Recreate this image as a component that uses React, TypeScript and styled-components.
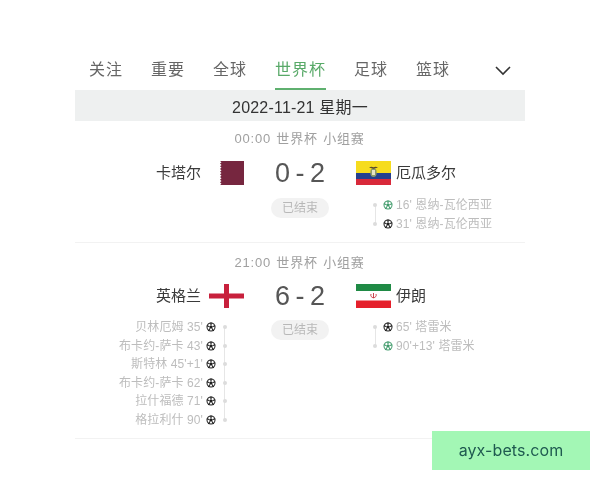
import React from "react";
import styled, { createGlobalStyle } from "styled-components";

const Global = createGlobalStyle`
  html, body { margin: 0; padding: 0; background: #fff; }
  body { font-family: "Liberation Sans", "Noto Sans CJK SC", sans-serif; }
`;

const Page = styled.div`
  position: relative;
  width: 600px;
  height: 480px;
  overflow: hidden;
  background: #fff;
  padding: 51px 0 0 75px;
  box-sizing: border-box;
  filter: blur(0.35px);
`;
const Column = styled.div`
  width: 450px;
`;
const Tabs = styled.nav`
  display: flex;
  align-items: flex-start;
  height: 39px;
  padding-left: 14px;
  gap: 28px;
  position: relative;
`;
const Tab = styled.div<{ $active?: boolean }>`
  height: 39px;
  box-sizing: border-box;
  padding-top: 8px;
  font-size: 16px;
  line-height: 22px;
  letter-spacing: 1px;
  color: ${(p) => (p.$active ? "#58a968" : "#666")};
  border-bottom: 2px solid ${(p) => (p.$active ? "#5fb06f" : "transparent")};
`;
const Chevron = styled.svg`
  position: absolute;
  left: 419px;
  top: 14px;
`;
const DateBar = styled.div`
  height: 31px;
  background: #eef0f0;
  display: flex;
  align-items: center;
  justify-content: center;
  font-size: 16px;
  letter-spacing: 0.2px;
  color: #333;
`;
const Match = styled.section<{ $height: number; $top: number }>`
  height: ${(p) => p.$height}px;
  box-sizing: border-box;
  padding-top: ${(p) => p.$top}px;
  border-bottom: 1px solid #f2f2f2;
`;
const Meta = styled.div`
  text-align: center;
  font-size: 13px;
  line-height: 18px;
  color: #a0a0a0;
  letter-spacing: 0.8px;
  word-spacing: 1px;
  padding-right: 1px;
`;
const Teams = styled.div<{ $top: number }>`
  display: grid;
  grid-template-columns: 1fr 110px 1fr;
  align-items: center;
  height: 36px;
  margin-top: ${(p) => p.$top}px;
`;
const Side = styled.div<{ $home?: boolean }>`
  display: flex;
  align-items: center;
  justify-content: ${(p) => (p.$home ? "flex-end" : "flex-start")};
  gap: ${(p) => (p.$home ? "8px" : "5px")};
  padding: ${(p) => (p.$home ? "0 1px 0 0" : "0 0 0 1px")};
`;
const TeamName = styled.span`
  font-size: 15px;
  line-height: 20px;
  color: #3a3a3a;
`;
const FlagBox = styled.div`
  width: 35px;
  height: 24px;
  display: flex;
  justify-content: flex-end;
`;
const Score = styled.div`
  text-align: center;
  font-size: 27px;
  line-height: 36px;
  color: #565656;
  word-spacing: -2px;
`;
const Details = styled.div<{ $top: number }>`
  display: grid;
  grid-template-columns: 1fr 110px 1fr;
  align-items: start;
  margin-top: ${(p) => p.$top}px;
`;
const Status = styled.div<{ $top: number }>`
  justify-self: center;
  width: 58px;
  height: 20px;
  margin-top: ${(p) => p.$top}px;
  border-radius: 10px;
  background: #f2f2f2;
  text-align: center;
  font-size: 12px;
  line-height: 20px;
  color: #b8b8b8;
`;
const Goals = styled.ul<{ $home?: boolean }>`
  position: relative;
  list-style: none;
  margin: 0;
  padding: 0;
  ${(p) => (p.$home ? "padding-right: 29px;" : "padding-left: 28px;")}
  &::before {
    content: "";
    position: absolute;
    top: 9px;
    bottom: 9px;
    ${(p) => (p.$home ? "right: 20px;" : "left: 20px;")}
    width: 1px;
    background: #e6e6e6;
  }
`;
const Goal = styled.li<{ $home?: boolean }>`
  position: relative;
  display: flex;
  flex-direction: ${(p) => (p.$home ? "row" : "row-reverse")};
  justify-content: flex-end;
  align-items: center;
  height: 18.5px;
  gap: 3px;
  font-size: 12px;
  line-height: 18px;
  letter-spacing: 0.1px;
  color: #bdbdbd;
  white-space: nowrap;
  &::after {
    content: "";
    position: absolute;
    top: 7px;
    ${(p) => (p.$home ? "right: -11px;" : "left: -10px;")}
    width: 4px;
    height: 4px;
    border-radius: 50%;
    background: #dcdcdc;
  }
`;
const Watermark = styled.div`
  position: absolute;
  left: 432px;
  top: 431px;
  width: 158px;
  height: 39px;
  background: #a3f7b5;
  color: #1f5a50;
  font-size: 16px;
  letter-spacing: 0.1px;
  line-height: 39px;
  text-align: center;
  font-family: "Inter", sans-serif;
`;

const Ball = ({ green }: { green?: boolean }) => {
  const c = green ? "#3f9a6a" : "#1c1c1c";
  return (
    <svg width="10" height="10" viewBox="0 0 10 10" style={{ flex: "none" }}>
      <circle cx="5" cy="5" r="4.5" fill={c} />
      <circle cx="5" cy="5" r="3.5" fill="#fff" />
      <polygon points="5,3.200 6.800,4.500 6.100,6.500 3.900,6.500 3.200,4.500" fill={c} />
      <path d="M5 .5v2.700M.8 3.700l2.400.8M9.200 3.700l-2.400.8M2.400 8.800l1.500-2.300M7.600 8.800l-1.500-2.300" stroke={c} strokeWidth="1.200" />
    </svg>
  );
};

const Qatar = () => (
  <svg width="24" height="24" viewBox="0 0 24 24">
    <path
      d="M24 0H0l1.5 1.3L0 2.6l1.5 1.4L0 5.300l1.500 1.300L0 8l1.500 1.300L0 10.700l1.500 1.300L0 13.300l1.500 1.400L0 16l1.500 1.300L0 18.700 1.500 20 0 21.300l1.500 1.400L0 24h24z"
      fill="#76263f"
    />
  </svg>
);
const Ecuador = () => (
  <svg width="35" height="24" viewBox="0 0 35 24">
    <rect width="35" height="12" fill="#f6dc1e" />
    <rect y="12" width="35" height="6" fill="#24408e" />
    <rect y="18" width="35" height="6" fill="#d8293a" />
    <ellipse cx="17.500" cy="11.500" rx="3.200" ry="4.500" fill="#8c9a6a" />
    <path d="M13 6.500c1.500-1 3-1 4.500-.2 1.500-.8 3-.8 4.500.2l-4.500 1.200z" fill="#5a4a2a" />
    <rect x="16" y="9" width="3" height="5" fill="#e6e2c8" />
  </svg>
);
const England = () => (
  <svg width="35" height="24" viewBox="0 0 35 24">
    <rect width="35" height="24" fill="#fff" />
    <rect x="15" width="5" height="24" fill="#c8203c" />
    <rect y="9.500" width="35" height="5" fill="#c8203c" />
  </svg>
);
const Iran = () => (
  <svg width="35" height="24" viewBox="0 0 35 24">
    <rect width="35" height="7" fill="#1f8a45" />
    <rect y="7" width="35" height="9" fill="#fff" />
    <rect y="16.500" width="35" height="7.500" fill="#e5202b" />
    <path d="M17.500 9v5M15 10c-.8 2 .5 3.500 2.500 3.800 2-.3 3.300-1.800 2.500-3.800" fill="none" stroke="#c8303a" strokeWidth="0.9" />
  </svg>
);

type GoalT = { text: string; green?: boolean };

const GoalList = ({ items, home }: { items: GoalT[]; home?: boolean }) => (
  <Goals $home={home}>
    {items.map((g, i) => (
      <Goal key={i} $home={home}>
        <span>{g.text}</span>
        <Ball green={g.green} />
      </Goal>
    ))}
  </Goals>
);

const tabs = ["关注", "重要", "全球", "世界杯", "足球", "篮球"];

export default function App() {
  return (
    <>
      <Global />
      <Page>
        <Column>
          <Tabs>
            {tabs.map((t) => (
              <Tab key={t} $active={t === "世界杯"}>
                {t}
              </Tab>
            ))}
            <Chevron width="18" height="11" viewBox="0 0 18 11" fill="none">
              <path d="M2 2l7 7 7-7" stroke="#333" strokeWidth="1.600" />
            </Chevron>
          </Tabs>
          <DateBar>2022-11-21 星期一</DateBar>
          <Match $height={122} $top={9}>
            <Meta>00:00 世界杯 小组赛</Meta>
            <Teams $top={7}>
              <Side $home>
                <TeamName>卡塔尔</TeamName>
                <FlagBox>
                  <Qatar />
                </FlagBox>
              </Side>
              <Score>0 - 2</Score>
              <Side>
                <Ecuador />
                <TeamName>厄瓜多尔</TeamName>
              </Side>
            </Teams>
            <Details $top={5}>
              <div />
              <Status $top={2}>已结束</Status>
              <GoalList
                items={[
                  { text: "16' 恩纳-瓦伦西亚", green: true },
                  { text: "31' 恩纳-瓦伦西亚" },
                ]}
              />
            </Details>
          </Match>
          <Match $height={196} $top={11}>
            <Meta>21:00 世界杯 小组赛</Meta>
            <Teams $top={6}>
              <Side $home>
                <TeamName>英格兰</TeamName>
                <FlagBox>
                  <England />
                </FlagBox>
              </Side>
              <Score>6 - 2</Score>
              <Side>
                <Iran />
                <TeamName>伊朗</TeamName>
              </Side>
            </Teams>
            <Details $top={4}>
              <GoalList
                home
                items={[
                  { text: "贝林厄姆 35'" },
                  { text: "布卡约-萨卡 43'" },
                  { text: "斯特林 45'+1'" },
                  { text: "布卡约-萨卡 62'" },
                  { text: "拉什福德 71'" },
                  { text: "格拉利什 90'" },
                ]}
              />
              <Status $top={2}>已结束</Status>
              <GoalList
                items={[
                  { text: "65' 塔雷米" },
                  { text: "90'+13' 塔雷米", green: true },
                ]}
              />
            </Details>
          </Match>
        </Column>
        <Watermark>ayx-bets.com</Watermark>
      </Page>
    </>
  );
}
